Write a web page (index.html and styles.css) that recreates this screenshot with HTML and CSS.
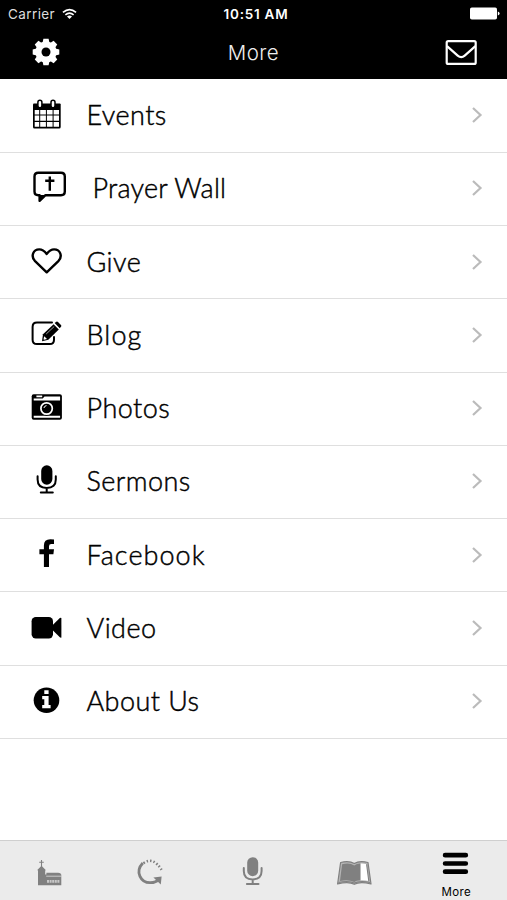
FILE: index.html
```html
<!DOCTYPE html>
<html lang="en">
  <head>
    <meta charset="UTF-8" />
    <meta name="viewport" content="width=device-width, initial-scale=1.0" />
    <title>More</title>
    <link rel="stylesheet" href="styles.css">
  </head>
  <body>
    <header class="header">
      <div class="status-bar">
        <div class="carrier">
          <span>Carrier</span>
          <svg class="wifi" viewBox="0 0 16 12" fill="none" stroke="#fff" stroke-width="1.7">
            <path d="M1 4.3Q8-1.8 15 4.3M3.6 7Q8 3.2 12.4 7" />
            <path d="M5.3 8.6Q8 6.4 10.7 8.6L8 11.3z" fill="#fff" stroke="none" />
          </svg>
        </div>
        <div class="time">10:51 AM</div>
        <div class="battery">
          <svg width="31" height="13" viewBox="0 0 31 13" fill="#fff">
            <rect x="1" y="0.5" width="27" height="12" rx="1.8" />
            <path d="M28.8 4.5q1.8.6 1.8 2t-1.8 2z" />
          </svg>
        </div>
      </div>
      <nav class="nav-bar">
        <svg class="nav-icon" viewBox="0 0 32 32">
          <g fill="#fff" transform="translate(16 16)">
            <circle r="10.6" />
            <g id="teeth">
              <path d="M-3.4-9.4L-2.6-13.3H2.6L3.4-9.4V9.4L2.6 13.3H-2.6L-3.4 9.4z" />
              <path d="M-9.4-3.4L-13.3-2.6V2.6L-9.4 3.4H9.4L13.3 2.6V-2.6L9.4-3.4z" />
            </g>
            <use href="#teeth" transform="rotate(45)" />
            <circle r="4.5" fill="#000" />
          </g>
        </svg>
        <h1 class="title">More</h1>
        <svg class="nav-icon" viewBox="0 0 32 32" fill="none" stroke="#fff" stroke-width="2.2" stroke-linejoin="round">
          <rect x="1.7" y="5.1" width="29" height="22.8" rx="1.5" />
          <path d="M2 10.2L12.7 19.6Q16.2 22.6 19.7 19.6L30.4 10.2" />
        </svg>
      </nav>
    </header>

    <main class="menu">
      <a class="menu-item">
        <svg class="icon" viewBox="0 0 40 40">
          <path d="M7 9.5Q7 8.5 8 8.5H33.7Q34.7 8.5 34.7 9.5V32Q34.7 33.5 33.2 33.5H8.5Q7 33.5 7 32z" />
          <path fill="#fff" d="M8.7 15h4.5v4.5H8.7zM14.2 15h5.7v4.5h-5.7zM20.9 15h5.7v4.5h-5.7zM27.6 15h5.4v4.5h-5.4zM8.7 20.6h4.5v5.2H8.7zM14.2 20.6h5.7v5.2h-5.7zM20.9 20.6h5.7v5.2h-5.7zM27.6 20.6h5.4v5.2h-5.4zM8.7 26.9h4.5v4.9H8.7zM14.2 26.9h5.7v4.9h-5.7zM20.9 26.9h5.7v4.9h-5.7zM27.6 26.9h5.4v4.9h-5.4z" />
          <rect x="11.9" y="5.2" width="4" height="7.5" rx="2" fill="#fff" stroke="#000" stroke-width="1.5" />
          <rect x="25" y="5.2" width="4" height="7.5" rx="2" fill="#fff" stroke="#000" stroke-width="1.5" />
        </svg>
        <span class="label">Events</span>
        <svg class="chevron" viewBox="0 0 12 18"><path d="M2 2l7.5 7L2 16" /></svg>
      </a>
      <a class="menu-item">
        <svg class="icon" viewBox="0 0 40 40">
          <path class="line" d="M12.3 4.8H35Q38.8 4.8 38.8 8.5V23.5Q38.8 27.2 35 27.2H19.5L13.6 32.8V27.2H12.3Q8.5 27.2 8.5 23.5V8.5Q8.5 4.8 12.3 4.8z" />
          <path d="M13 27h6.5l-6.3 7z" />
          <path class="line" d="M23.8 8.6v14.2M19.2 12.8h9.2" />
        </svg>
        <span class="label label-wide">Prayer Wall</span>
        <svg class="chevron" viewBox="0 0 12 18"><path d="M2 2l7.5 7L2 16" /></svg>
      </a>
      <a class="menu-item">
        <svg class="icon" viewBox="0 0 40 40">
          <path class="line" d="M20.7 30.3L8.8 18.8C4.7 14.2 7 7.4 13.3 7.4C17 7.4 18.8 9.5 20.7 11.9C22.6 9.5 24.4 7.4 28.1 7.4C34.4 7.4 36.7 14.2 32.6 18.8z" />
        </svg>
        <span class="label">Give</span>
        <svg class="chevron" viewBox="0 0 12 18"><path d="M2 2l7.5 7L2 16" /></svg>
      </a>
      <a class="menu-item">
        <svg class="icon" viewBox="0 0 40 40">
          <path class="line thin" d="M26 7.6H11Q6.6 7.6 6.6 12V24.7Q6.6 29.1 11 29.1H23.8Q28 29.1 28 24.7V22" />
          <path d="M17 19.3L27.6 9.2L32.8 14.5L22.3 24.8L16 26.2z" />
          <path d="M28.7 8.1L30.3 6.7Q31.2 6 32 6.9L35 10Q35.8 10.9 35 11.8L33.7 13.3z" />
          <path d="M18.2 21.2L21 24.1L18 24.7L17.5 24.2z" fill="#fff" />
          <path d="M20.2 19L28.2 11.5" stroke="#fff" stroke-width=".6" />
        </svg>
        <span class="label label-blog">Blog</span>
        <svg class="chevron" viewBox="0 0 12 18"><path d="M2 2l7.5 7L2 16" /></svg>
      </a>
      <a class="menu-item">
        <svg class="icon" viewBox="0 0 40 40">
          <rect x="5.7" y="6.3" width="30.2" height="25.5" rx="2" />
          <path fill="#fff" d="M7.7 10.5h9l1.8-1.9h15.6v4H7.7zM7.7 27.7h26.4v2H7.7zM10.4 7.4h5.8v1.8h-5.8z" />
          <circle cx="20.6" cy="20.5" r="7.2" />
          <circle cx="20.6" cy="20.5" r="5.7" fill="none" stroke="#fff" stroke-width="1.7" />
          <path d="M17.9 20Q18.4 17.8 20.5 17.6" fill="none" stroke="#fff" stroke-width="1" />
        </svg>
        <span class="label">Photos</span>
        <svg class="chevron" viewBox="0 0 12 18"><path d="M2 2l7.5 7L2 16" /></svg>
      </a>
      <a class="menu-item">
        <svg class="icon" viewBox="0 0 40 40">
          <rect x="15.2" y="4.3" width="11.2" height="19.4" rx="5.6" />
          <path class="line thin" d="M11.6 15.3V18.5Q11.6 26.9 20.7 26.9T29.8 18.5V15.3M20.7 27v4.6M14.8 31.6h12" />
        </svg>
        <span class="label">Sermons</span>
        <svg class="chevron" viewBox="0 0 12 18"><path d="M2 2l7.5 7L2 16" /></svg>
      </a>
      <a class="menu-item">
        <svg class="icon" viewBox="0 0 40 40">
          <path d="M28 4.6V9H25.3Q23 9 23 11.3V14.3H28L27.4 19.2H23V32H17.9V19.2H13.4V14.3H17.9V10.6Q17.9 4.3 24.3 4.3z" />
        </svg>
        <span class="label label-facebook">Facebook</span>
        <svg class="chevron" viewBox="0 0 12 18"><path d="M2 2l7.5 7L2 16" /></svg>
      </a>
      <a class="menu-item">
        <svg class="icon" viewBox="0 0 40 40">
          <rect x="5.6" y="9" width="21.4" height="21.4" rx="4.2" />
          <path d="M26.5 17.3L33.8 10.1Q35.4 9 35.4 10.5V28.9Q35.4 30.4 33.8 29.3L26.5 22.1z" />
        </svg>
        <span class="label">Video</span>
        <svg class="chevron" viewBox="0 0 12 18"><path d="M2 2l7.5 7L2 16" /></svg>
      </a>
      <a class="menu-item">
        <svg class="icon" viewBox="0 0 40 40">
          <circle cx="20.5" cy="19.2" r="12.8" />
          <path fill="#fff" d="M18.3 9.2h4.3v3.7h-4.3zM16.2 15.1h6.4v9h2v3.2h-8.4v-3.2h2.1v-5.8h-2.1z" />
        </svg>
        <span class="label">About Us</span>
        <svg class="chevron" viewBox="0 0 12 18"><path d="M2 2l7.5 7L2 16" /></svg>
      </a>
    </main>

    <footer class="tab-bar">
      <a class="tab">
        <svg class="tab-icon" viewBox="0 0 40 40">
          <path d="M10.5 10v7M8.2 12.2h4.6" stroke="#808080" stroke-width="1.1" />
          <path d="M10.5 15.8L15 20.2H14.2V24.5H30.3V35.3H7V20.2H6z" />
          <path d="M15.4 22.8H27.2Q30 22.8 30 25.1H15.4z" />
          <path d="M15.2 26.2h15.2" stroke="#ebebeb" stroke-width=".7" />
          <path d="M16 31.4h12.4" stroke="#c8c8c8" stroke-width="2.8" stroke-dasharray="2 .6" />
        </svg>
      </a>
      <a class="tab">
        <svg class="tab-icon" viewBox="0 0 40 40">
          <path d="M10.8 13C2.5 22 9 33 18.5 32.7Q24 32.5 27 29.2" fill="none" stroke="#808080" stroke-width="2.8" />
          <path d="M21.4 27.5L29.6 26.6L28.8 34.6z" />
          <path d="M11.5 13.2Q21 6.2 29.5 19.8" fill="none" stroke="#808080" stroke-width="2.5" stroke-dasharray="1.5 2" />
        </svg>
      </a>
      <a class="tab">
        <svg class="tab-icon" viewBox="0 0 40 40">
          <rect x="14.2" y="7.2" width="11" height="19" rx="5.5" />
          <path d="M10.8 18V21Q10.8 29.4 19.7 29.4T28.6 21V18M19.7 29.4v4.7M13.9 34h11.6" fill="none" stroke="#808080" stroke-width="2" stroke-linecap="round" />
        </svg>
      </a>
      <a class="tab">
        <svg class="tab-icon" viewBox="0 0 40 40">
          <path fill="#b5b5b5" stroke="#808080" stroke-width="1.2" stroke-linejoin="round" d="M5.6 12.5Q14 10.3 19.3 13.5Q24.5 10.3 33 12.5L36 34Q25 31 19.3 34.3Q13.5 31 2.6 34z" />
          <path d="M7.1 14.3Q14.5 12.5 19.3 15.4Q21.5 13.6 25.2 13.5V30.3Q21 30.4 19.3 32.1Q13 28.9 5 31.1z" />
          <path fill="#fff" d="M25.8 13.5Q29 13.4 31.6 14.2L33.8 31.1Q29.5 30 25.8 30.3z" />
          <path fill="none" stroke="#808080" stroke-width="1.1" d="M31.6 14.2L33.8 31.1M3.5 32.5Q13.5 30.3 19.3 33.1Q25 30.3 35 32.5" />
        </svg>
      </a>
      <a class="tab active">
        <svg class="tab-icon" viewBox="0 0 40 40">
          <path d="M9.1 5.2H29.8M9.1 13.5H29.8M9.1 21.7H29.8" stroke="#000" stroke-width="4.7" stroke-linecap="round" />
        </svg>
        <span class="tab-label">More</span>
      </a>
    </footer>
  </body>
</html>
```

FILE: styles.css
```css
* {
  box-sizing: border-box;
}
body {
  margin: 0;
  height: 900px;
  display: flex;
  flex-direction: column;
  background: #fff;
  font-family: Lato, sans-serif;
  color: #000;
  overflow: hidden;
}
svg {
  display: block;
  flex: none;
  overflow: visible;
}
.header {
  height: 79px;
  background: #000;
  color: #fff;
  font-family: Inter, sans-serif;
}
.status-bar {
  height: 27px;
  padding: 0 7px 0 8px;
  display: grid;
  grid-template-columns: 1fr auto 1fr;
  align-items: center;
}
.carrier {
  display: flex;
  align-items: center;
  gap: 7px;
  font-size: 13.5px;
  color: #ddd;
  letter-spacing: 0.4px;
}
.wifi {
  width: 15px;
  height: 12px;
}
.time {
  padding-left: 4px;
  font-size: 13.5px;
  font-weight: 600;
  letter-spacing: 0.75px;
}
.battery {
  display: flex;
  justify-content: flex-end;
}
.nav-bar {
  height: 52px;
  padding: 0 30px 2px;
  display: flex;
  align-items: center;
  justify-content: space-between;
}
.nav-icon {
  width: 32px;
  height: 32px;
}
.title {
  margin: 0;
  font-size: 20.5px;
  font-weight: 300;
  letter-spacing: 0.5px;
  color: #eee;
}
.menu {
  flex: 1;
  padding-top: 0.5px;
}
.menu-item {
  height: 73.25px;
  padding: 0 24px 1px 26px;
  display: flex;
  align-items: center;
  border-bottom: 1px solid #dfdfdf;
}
.icon {
  width: 40px;
  height: 40px;
}
.line {
  fill: none;
  stroke: #000;
  stroke-width: 2.4;
  stroke-linejoin: round;
}
.thin {
  stroke-width: 2;
  stroke-linecap: round;
}
.label {
  flex: 1;
  margin-left: 20.5px;
  font-size: 27px;
  font-weight: 300;
  letter-spacing: 0.45px;
  line-height: 32px;
  white-space: nowrap;
  -webkit-text-stroke: 0.45px #000;
}
.label-wide {
  margin-left: 26.5px;
  letter-spacing: 0.2px;
}
.label-blog {
  letter-spacing: 1.1px;
}
.label-facebook {
  letter-spacing: 1.05px;
}
.chevron {
  width: 12px;
  height: 18px;
  fill: none;
  stroke: #bbb;
  stroke-width: 2.2;
}
.tab-bar {
  height: 60px;
  display: grid;
  grid-template-columns: repeat(5, 1fr);
  background: #ebebeb;
  border-top: 1px solid #cfcfcf;
  padding-top: 9px;
}
.tab {
  display: flex;
  flex-direction: column;
  align-items: center;
  fill: #808080;
}
.tab-icon {
  width: 40px;
  height: 40px;
}
.tab-label {
  margin-top: -6px;
  font-family: Inter, sans-serif;
  font-size: 11.5px;
  line-height: 16px;
  letter-spacing: 0.4px;
}
```
